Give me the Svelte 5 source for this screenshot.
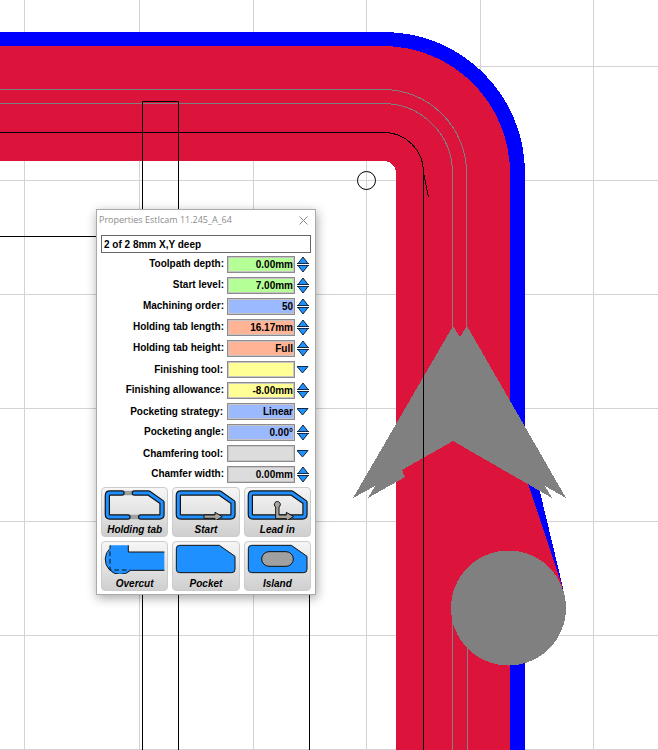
<script>
    let name = $state('2 of 2 8mm X,Y deep');

    // `kind` is "spin" for number fields and "list" for drop-downs
    let rows = $state([
        { id: 'depth', label: 'Toolpath depth:', value: '0.00mm', kind: 'spin', color: 'green' },
        { id: 'start', label: 'Start level:', value: '7.00mm', kind: 'spin', color: 'green' },
        { id: 'order', label: 'Machining order:', value: '50', kind: 'spin', color: 'blue' },
        { id: 'tab-length', label: 'Holding tab length:', value: '16.17mm', kind: 'spin', color: 'orange' },
        { id: 'tab-height', label: 'Holding tab height:', value: 'Full', kind: 'spin', color: 'orange' },
        { id: 'finish-tool', label: 'Finishing tool:', value: '', kind: 'list', color: 'yellow' },
        { id: 'allowance', label: 'Finishing allowance:', value: '-8.00mm', kind: 'spin', color: 'yellow' },
        { id: 'strategy', label: 'Pocketing strategy:', value: 'Linear', kind: 'list', color: 'blue' },
        { id: 'angle', label: 'Pocketing angle:', value: '0.00°', kind: 'spin', color: 'blue' },
        { id: 'chamfer-tool', label: 'Chamfering tool:', value: '', kind: 'list', color: 'gray' },
        { id: 'chamfer', label: 'Chamfer width:', value: '0.00mm', kind: 'spin', color: 'gray' }
    ]);

    const tools = ['Holding tab', 'Start', 'Lead in', 'Overcut', 'Pocket', 'Island'];

    const gridX = [24, 139, 253, 366, 480, 593];
    const gridY = [66, 180, 294, 408, 521, 635, 749];

    const outline = 'M10 17 Q10 9 18 9 H134 L174 37 V73 Q174 81 166 81 H18 Q10 81 10 73 Z';
    const solid = 'M4 14 Q4 4 14 4 H133 L180 37 V76 Q180 86 170 86 H14 Q4 86 4 76 Z';

    function step(row, dir) {
        const n = parseFloat(row.value);
        if (isNaN(n)) return;
        const unit = row.value.replace(/^[-\d.]+/, '');
        row.value = row.id === 'order' ? String(n + dir) : (n + dir).toFixed(2) + unit;
    }
</script>

{#snippet contour(d)}
    <path class="edge" {d} />
    <path class="core" {d} />
{/snippet}

<main>
    <svg class="drawing" viewBox="0 0 658 750" preserveAspectRatio="xMinYMin slice" shape-rendering="crispEdges" aria-hidden="true">
        <g class="grid">
            {#each gridX as x}
                <path d="M{x}.5 0V750" />
            {/each}
            {#each gridY as y}
                <path d="M0 {y}.5H658" />
            {/each}
        </g>

        <!-- milled area -->
        <path fill="#0000ff" d="M0 32H384A141 141 0 0 1 525 173V429L563 588L525 640V750H480V173L384 60H0Z" />
        <path fill="#dc143c" d="M0 46H383A127 127 0 0 1 510 173V430L563 588L510 640V750H396V173A12 12 0 0 0 384 161H0Z" />

        <g class="center">
            <path d="M0 89.5H383A83.5 83.5 0 0 1 466.5 173V340" />
            <path d="M0 103.5H383A69.5 69.5 0 0 1 452.5 173V340" />
            <path d="M452.5 620V750M467.5 620V750" />
        </g>

        <path fill="#808080" d="M453 326L460 337L467 326L566 498L545 486L552 498L453 441L402 470L405 477L368 498L375 486L353 498Z" />
        <circle fill="#808080" cx="508.5" cy="608" r="57.5" />

        <g class="part">
            <path d="M0 132.5H384A39.5 39.5 0 0 1 423.5 172V750M423.5 172L428.5 197" />
            <path d="M142.5 750V101.5H178.5V750" />
            <path d="M0 236.5H309.5V750" />
            <circle cx="366.5" cy="180.5" r="9" shape-rendering="auto" />
        </g>
    </svg>

    <section class="dialog" aria-label="Properties">
        <header>
            <span>Properties EstIcam 11.245_A_64</span>
            <button class="close" aria-label="Close">
                <svg viewBox="0 0 9 9" width="9" height="9"><path d="M0.5 0.5L8.5 8.5M8.5 0.5L0.5 8.5" stroke="#888" /></svg>
            </button>
        </header>

        <input class="name" aria-label="Name" bind:value={name} />

        <div class="rows">
            {#each rows as row}
                <div class="row {row.kind}">
                    <label for={row.id}>{row.label}</label>
                    {#if row.kind === 'spin'}
                        <input id={row.id} class="field {row.color}" bind:value={row.value} />
                        <div class="arrows">
                            <button aria-label="Increase" onclick={() => step(row, 1)}>
                                <svg viewBox="0 0 12 8"><path d="M1 7.5L6 1L11 7.5Z" /><path d="M0 7.5H12" /></svg>
                            </button>
                            <button aria-label="Decrease" onclick={() => step(row, -1)}>
                                <svg viewBox="0 0 12 8"><path d="M1 0.5L6 7L11 0.5Z" /><path d="M0 0.5H12" /></svg>
                            </button>
                        </div>
                    {:else}
                        <select id={row.id} class="field {row.color}" bind:value={row.value}>
                            <option value={row.value}>{row.value}</option>
                        </select>
                        <div class="arrows">
                            <svg viewBox="0 0 12 8"><path d="M0 0.5L5.5 7L11 0.5Z" /></svg>
                        </div>
                    {/if}
                </div>
            {/each}
        </div>

        <div class="tools">
            {#each tools as tool}
                <button>
                    <svg viewBox="0 0 183 90" aria-hidden="true">
                        {#if tool === 'Holding tab'}
                            <path d="M58 9H87M77 81H106" stroke="#a0a0a0" stroke-width="14" fill="none" />
                            {@render contour('M54 9H18Q10 9 10 17V73Q10 81 18 81H72')}
                            {@render contour('M91 9H134L174 37V73Q174 81 166 81H110')}
                        {:else if tool === 'Start'}
                            {@render contour(outline)}
                            <path class="metal" d="M87 75H120V67L142 80L120 93V85H87Z" />
                        {:else if tool === 'Lead in'}
                            {@render contour(outline)}
                            <path class="metal" d="M86 51A9 9 0 1 1 96 51V75H118V67L140 80L118 93V86H86Z" />
                        {:else if tool === 'Overcut'}
                            <path fill="#1e90ff" d="M18 4H73V24H181V79H81A44 44 0 0 1 18 15Z" />
                            <path class="line" d="M18 4V13A44 44 0 0 0 80 79H181M73 4V24H181" />
                            <path class="line" d="M18 22V78H78" stroke-dasharray="14 9" />
                        {:else}
                            <path class="line" fill="#1e90ff" d={solid} />
                            {#if tool === 'Island'}
                                <rect x="44" y="23" width="95" height="44" rx="22" fill="#a0a0a0" stroke="#111" stroke-width="3" />
                            {/if}
                        {/if}
                    </svg>
                    <span>{tool}</span>
                </button>
            {/each}
        </div>
    </section>
</main>

<style>
    :global(body) {
        margin: 0;
        background: #fff;
    }

    main {
        position: relative;
        height: 100vh;
        overflow: hidden;
        font: bold 10px/13px 'Liberation Sans', Arial, sans-serif;
        color: #000;
    }

    button,
    input,
    select {
        box-sizing: border-box;
        margin: 0;
        padding: 0;
        font: inherit;
        color: inherit;
    }

    svg {
        display: block;
    }

    .drawing {
        width: 100%;
        height: 100%;
    }
    .drawing g {
        fill: none;
    }
    .grid {
        stroke: #d3d3d3;
    }
    .center {
        stroke: #808080;
    }
    .part {
        stroke: #000;
    }

    .dialog {
        position: absolute;
        left: 96px;
        top: 209px;
        box-sizing: border-box;
        width: 220px;
        padding: 0 4px 3px;
        border: 1px solid #aaa;
        background: #fff;
        box-shadow: 1px 3px 10px rgba(0, 0, 0, 0.35);
    }

    header {
        display: flex;
        align-items: center;
        justify-content: space-between;
        height: 20px;
        margin: 0 3px 5px -2px;
        font: 9px/20px 'Open Sans', 'Noto Sans', sans-serif;
        color: #8c8c8c;
    }
    .close {
        border: 0;
        background: none;
    }

    .name {
        display: block;
        width: 100%;
        height: 18px;
        padding: 0 2px;
        border: 1px solid #666;
        background: #fff;
    }

    .rows {
        display: grid;
        gap: 4px;
        margin: 3px 2px 4px 0;
    }
    .row {
        display: grid;
        grid-template-columns: 1fr 68px 12px;
        column-gap: 2px;
        align-items: center;
        height: 17px;
    }
    label {
        padding: 0 1px 3px 0;
        text-align: right;
    }
    .list label {
        padding: 0 2px 0 0;
    }

    .field {
        width: 100%;
        height: 17px;
        padding: 0 1px;
        border: 1px solid #8c8c90;
        border-radius: 0;
        outline: 0;
        box-shadow: inset 0 0 0 1px #c8c4c4;
        text-align: right;
        text-align-last: right;
        appearance: none;
    }
    .green {
        background: #b4ff96;
    }
    .blue {
        background: #9bb9ff;
    }
    .orange {
        background: #ffb496;
    }
    .yellow {
        background: #ffff96;
    }
    .gray {
        background: #dcdcdc;
    }

    .arrows {
        display: grid;
        gap: 1px;
    }
    .arrows button {
        height: 8px;
        border: 0;
        background: none;
    }
    .arrows svg {
        width: 12px;
        height: 8px;
        fill: #1e90ff;
        stroke: #102840;
    }

    .tools {
        display: grid;
        grid-template-columns: repeat(3, 1fr);
        gap: 4px;
    }
    .tools button {
        display: flex;
        flex-direction: column;
        align-items: center;
        height: 50px;
        padding: 2px 0 0;
        border: 1px solid #ccc;
        border-radius: 4px;
        background: linear-gradient(#f6f6f6, #cfcfcf);
        font-style: italic;
    }
    .tools svg {
        width: 61px;
        height: 30px;
    }
    .tools span {
        margin-top: 3px;
    }
    .edge,
    .core {
        fill: none;
        stroke: #111;
        stroke-width: 16;
        stroke-linecap: round;
        stroke-linejoin: round;
    }
    .core {
        stroke: #1e90ff;
        stroke-width: 9;
    }
    .metal {
        fill: #a8a49c;
        stroke: #111;
        stroke-width: 3;
        stroke-linejoin: round;
    }
    .line {
        stroke: #111;
        stroke-width: 3;
    }
    .line:not([fill]) {
        fill: none;
    }
</style>
